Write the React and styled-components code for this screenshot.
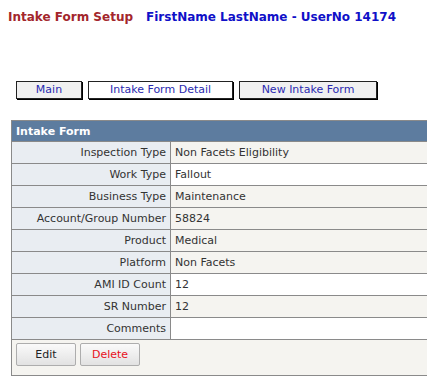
import React from 'react';
import styled, { createGlobalStyle } from 'styled-components';

const GlobalStyle = createGlobalStyle`
  body {
    margin: 8px;
    font-family: "DejaVu Sans", Verdana, sans-serif;
    font-size: 11px;
    background: #fff;
  }
`;

const TitleBar = styled.div`
  display: flex;
  gap: 13px;
  font-size: 12px;
  font-weight: bold;
  line-height: 16px;
  padding-top: 1px;
`;

const Title = styled.span`
  color: ${(p) => p.color};
`;

const Tabs = styled.div`
  display: flex;
  gap: 6px;
  margin: 56px 0 0 8px;
`;

const Tab = styled.div`
  width: ${(p) => p.width}px;
  height: 18px;
  box-sizing: border-box;
  border: 1px solid #222;
  box-shadow: 1px 1px 0 #000;
  background: ${(p) => (p.active ? '#fff' : '#f0f0f0')};
  color: #2a2ab0;
  text-align: center;
  line-height: 16px;
`;

const Panel = styled.table`
  margin: 21px 0 0 3px;
  width: 419px;
  border-collapse: collapse;
  border: 1px solid #8a8a8a;
  background: #f5f4f0;
`;

const HeaderCell = styled.th`
  background: #5d7c9f;
  color: #fff;
  font-weight: bold;
  text-align: left;
  height: 20px;
  padding: 0 4px;
  font-size: 11px;
`;

const Label = styled.td`
  width: 150px;
  height: 21px;
  padding: 0 4px;
  text-align: right;
  color: #333;
  background: #e9edf2;
  border: 1px solid #8a8a8a;
`;

const Value = styled.td`
  height: 21px;
  padding: 0 4px;
  color: #333;
  background: ${(p) => (p.white ? '#fff' : '#f5f4f0')};
  border: 1px solid #8a8a8a;
`;

const ButtonCell = styled.td`
  height: 30px;
  padding: 3px 0 2px 4px;
  vertical-align: top;
`;

const Button = styled.button`
  width: 60px;
  height: 23px;
  margin-right: 4px;
  font-family: "DejaVu Sans", Verdana, sans-serif;
  font-size: 11px;
  color: ${(p) => (p.danger ? '#e8101c' : '#222')};
  background: linear-gradient(#fafafa, #e2e2e2);
  border: 1px solid #adadad;
  border-radius: 2px;
  padding: 0;
`;

const rows = [
  ['Inspection Type', 'Non Facets Eligibility'],
  ['Work Type', 'Fallout', true],
  ['Business Type', 'Maintenance'],
  ['Account/Group Number', '58824'],
  ['Product', 'Medical'],
  ['Platform', 'Non Facets'],
  ['AMI ID Count', '12', true],
  ['SR Number', '12'],
  ['Comments', '', true],
];

export default function App() {
  return (
    <>
      <GlobalStyle />
      <TitleBar>
        <Title color="#a3262c">Intake Form Setup</Title>
        <Title color="#1010c8">FirstName LastName - UserNo 14174</Title>
      </TitleBar>
      <Tabs>
        <Tab width={66}>Main</Tab>
        <Tab width={145} active>Intake Form Detail</Tab>
        <Tab width={138}>New Intake Form</Tab>
      </Tabs>
      <Panel>
        <thead>
          <tr>
            <HeaderCell colSpan={2}>Intake Form</HeaderCell>
          </tr>
        </thead>
        <tbody>
          {rows.map(([label, value, white]) => (
            <tr key={label}>
              <Label>{label}</Label>
              <Value white={white}>{value}</Value>
            </tr>
          ))}
          <tr>
            <ButtonCell colSpan={2}>
              <Button>Edit</Button>
              <Button danger>Delete</Button>
            </ButtonCell>
          </tr>
        </tbody>
      </Panel>
    </>
  );
}
